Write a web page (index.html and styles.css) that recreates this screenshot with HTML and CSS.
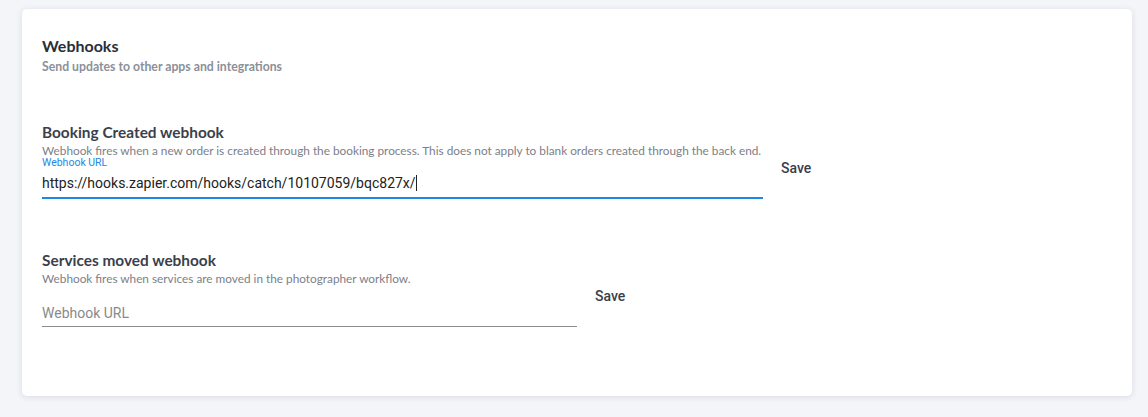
FILE: index.html
```html
<!DOCTYPE html>
<html>
<head>
<meta charset="utf-8">
<link rel="stylesheet" href="styles.css">
</head>
<body>
<div class="card">
  <div class="card-head">
    <h2 class="title">Webhooks</h2>
    <p class="subtitle">Send updates to other apps and integrations</p>
  </div>

  <div class="hook">
    <div class="hook-main">
      <h3 class="hook-title">Booking Created webhook</h3>
      <p class="hook-desc">Webhook fires when a new order is created through the booking process. This does not apply to blank orders created through the back end.</p>
      <div class="field field-focused field-wide">
        <label class="field-label">Webhook URL</label>
        <div class="field-value">https://hooks.zapier.com/hooks/catch/10107059/bqc827x/<span class="caret"></span></div>
      </div>
    </div>
    <button class="save">Save</button>
  </div>

  <div class="hook hook-second">
    <div class="hook-main">
      <h3 class="hook-title">Services moved webhook</h3>
      <p class="hook-desc">Webhook fires when services are moved in the photographer workflow.</p>
      <div class="field field-narrow">
        <div class="field-placeholder">Webhook URL</div>
      </div>
    </div>
    <button class="save">Save</button>
  </div>
</div>
</body>
</html>
```
FILE: styles.css
```css
html, body {
  margin: 0;
  padding: 0;
  background: #f4f5f9;
}
body {
  padding: 9px 16px 21px 22px;
  font-family: Lato, "Open Sans", sans-serif;
}
.card {
  box-sizing: border-box;
  background: #ffffff;
  border-radius: 5px;
  box-shadow: 0 1px 6px rgba(40, 45, 80, 0.12);
  padding: 28px 20px 0 20px;
  height: 387px;
}
.title {
  margin: 0;
  font-size: 16px;
  font-weight: 700;
  line-height: 18px;
  color: #2a2e3b;
}
.subtitle {
  margin: 5px 0 0 0;
  font-size: 12.25px;
  font-weight: 700;
  line-height: 14px;
  color: #8b9099;
}
.hook {
  display: flex;
  align-items: center;
  margin-top: 49px;
}
.hook-second {
  margin-top: 38px;
}
.hook-main {
  display: flex;
  flex-direction: column;
  padding-bottom: 14px;
}
.hook-title {
  margin: 0;
  font-size: 15.4px;
  font-weight: 700;
  line-height: 18px;
  color: #3b3f4c;
}
.hook-desc {
  margin: 3px 0 0 0;
  font-size: 11.8px;
  line-height: 14px;
  color: #7c808a;
}
.field {
  font-family: Roboto, sans-serif;
  border-bottom: 1px solid #8c8c8c;
}
.field-wide { width: 721px; }
.field-narrow { width: 535px; margin-top: 12px; }
.field-focused {
  border-bottom: 2px solid #1e88e5;
}
.field-label {
  display: block;
  font-size: 10.5px;
  line-height: 10px;
  color: #1e88e5;
}
.field-value {
  font-size: 14px;
  line-height: 20px;
  color: #222222;
  padding: 5px 0 4px 0;
}
.caret {
  display: inline-block;
  width: 1px;
  height: 16px;
  background: #222;
  vertical-align: -3px;
}
.field-placeholder {
  font-size: 14px;
  line-height: 20px;
  color: #8a8a8a;
  padding: 5px 0 3px 0;
}
.save {
  margin-left: 2px;
  padding: 0 16px;
  border: 0;
  background: transparent;
  font-family: Roboto, sans-serif;
  font-size: 14px;
  font-weight: 500;
  color: #3a3d48;
  line-height: 20px;
  cursor: pointer;
}
```
